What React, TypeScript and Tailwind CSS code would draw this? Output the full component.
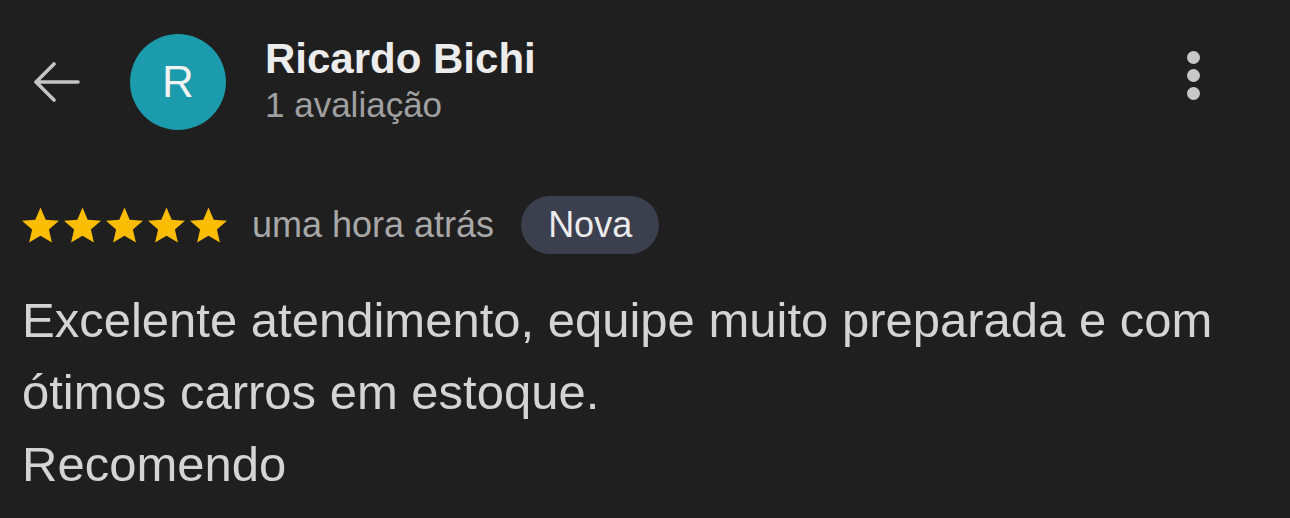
import React from "react";

function Star() {
  return (
    <svg width="37" height="36" viewBox="2 2 20 19" className="block">
      <path
        fill="#fbbc04"
        d="M12 17.27L18.18 21l-1.64-7.03L22 9.24l-7.19-.61L12 2 9.19 8.63 2 9.24l5.46 4.73L5.82 21z"
      />
    </svg>
  );
}

export default function App() {
  return (
    <div
      className="w-[1290px] h-[518px] overflow-hidden bg-[#1f1f1f]"
      style={{ fontFamily: "'Liberation Sans', Arial, sans-serif" }}
    >
      {/* Header */}
      <div className="flex items-center pt-[34px]">
        <svg width="48" height="40" viewBox="0 0 48 40" className="ml-[32px] shrink-0">
          <path
            d="M46 20H4M22 2L4 20l18 18"
            fill="none"
            stroke="#c4c4c4"
            strokeWidth="3.6"
            strokeLinecap="round"
            strokeLinejoin="round"
          />
        </svg>
        <div className="ml-[50px] w-[96px] h-[96px] rounded-full bg-[#1b9bab] flex items-center justify-center shrink-0">
          <span className="text-[44px] leading-none text-[#f2f2f2]">R</span>
        </div>
        <div className="ml-[39px] flex flex-col flex-1">
          <span className="text-[42px] leading-[46px] font-bold text-[#ececec]">Ricardo Bichi</span>
          <span className="text-[35px] leading-[46px] text-[#a0a0a0]">1 avaliação</span>
        </div>
        <div className="mr-[90px] flex flex-col items-center gap-[5px] -mt-[14px]">
          <div className="w-[13px] h-[13px] rounded-full bg-[#c8c8c8]" />
          <div className="w-[13px] h-[13px] rounded-full bg-[#c8c8c8]" />
          <div className="w-[13px] h-[13px] rounded-full bg-[#c8c8c8]" />
        </div>
      </div>

      {/* Rating row */}
      <div className="flex items-center mt-[66px] pl-[22px] h-[58px]">
        <div className="flex gap-[5px]">
          <Star />
          <Star />
          <Star />
          <Star />
          <Star />
        </div>
        <span className="ml-[25px] text-[36px] text-[#a8a8a8]">uma hora atrás</span>
        <span className="ml-[27px] h-[58px] px-[27px] rounded-full bg-[#3b3f4e] flex items-center text-[36px] text-[#ececec]">
          Nova
        </span>
      </div>

      {/* Review text */}
      <div className="mt-[30px] pl-[22px] text-[49px] leading-[72px] text-[#d4d4d4] whitespace-nowrap">
        <div>Excelente atendimento, equipe muito preparada e com</div>
        <div>ótimos carros em estoque.</div>
        <div>Recomendo</div>
      </div>
    </div>
  );
}
